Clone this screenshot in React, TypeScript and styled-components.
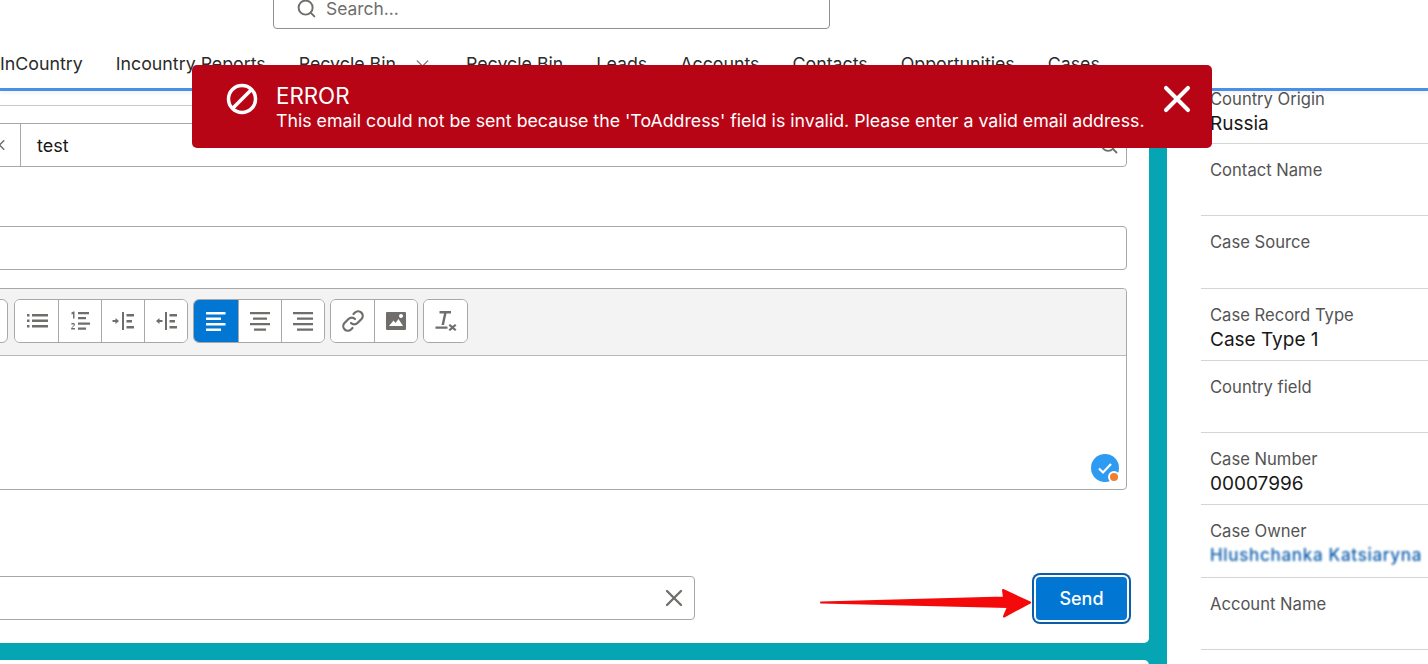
import React from "react";
import styled, { createGlobalStyle } from "styled-components";
import { ChevronDown, Search, X } from "lucide-react";

const GlobalStyle = createGlobalStyle`
  html, body {
    margin: 0;
    padding: 0;
    background: #fff;
    overflow: hidden;
  }
  * {
    box-sizing: border-box;
  }
`;

const Page = styled.div`
  position: relative;
  width: 1428px;
  height: 664px;
  overflow: hidden;
  background: #fff;
  font-family: Inter, "Liberation Sans", sans-serif;
  color: #181818;
`;

const Header = styled.header`
  position: relative;
  display: flex;
  flex-direction: column;
  height: 91px;
  border-bottom: 3px solid #4a90ea;
  box-shadow: 0 2px 4px rgba(0, 0, 0, 0.06);
`;

const SearchBar = styled.div`
  display: flex;
  align-items: center;
  gap: 9px;
  flex: none;
  width: 557px;
  height: 45px;
  margin: -16px 0 0 273px;
  padding: 3px 0 0 22px;
  border: 1px solid #8f8f8f;
  border-radius: 4px;
  color: #706e6b;
  font-size: 17.4px;
`;

const Nav = styled.nav`
  display: flex;
  align-items: center;
  gap: 33px;
  flex: none;
  height: 36px;
  margin-top: 16px;
  font-size: 17.8px;
  color: #2b2b2b;
  white-space: nowrap;
`;

const NavItem = styled.span`
  display: inline-flex;
  align-items: center;
  gap: 16px;
  svg {
    color: #706e6b;
  }
`;

const Body = styled.div`
  display: grid;
  grid-template-columns: 1167px 1fr;
  height: 573px;
`;

const Stage = styled.main`
  display: flex;
  flex-direction: column;
  gap: 17px;
  padding-right: 18px;
  background: #06a5b4;
`;

const Card = styled.section`
  flex: none;
  height: 552px;
  padding: 14px 22px 0 0;
  background: #fff;
  border-bottom-right-radius: 5px;
  overflow: hidden;
`;

const NextCard = styled.div`
  flex: none;
  height: 20px;
  background: #fff;
  border-top-right-radius: 5px;
`;

const Rule = styled.div`
  height: 1px;
  margin-bottom: 17px;
  background: #c9c9c9;
`;

const InputBox = styled.div<{ $top?: number }>`
  display: flex;
  align-items: center;
  height: 44px;
  margin: ${(p) => p.$top ?? 0}px 0 0 -10px;
  background: #fff;
  border: 1px solid #a8a8a8;
  border-radius: 4px;
  font-size: 18px;
`;

const PillEnd = styled.span`
  display: flex;
  align-items: center;
  justify-content: flex-end;
  flex: none;
  width: 30px;
  height: 100%;
  padding-right: 12px;
  border-right: 1px solid #a8a8a8;
  color: #706e6b;
`;

const RecipientText = styled.span`
  flex: 1;
  padding-left: 16px;
`;

const BoxIcon = styled.span`
  display: flex;
  margin-right: 7px;
  color: #706e6b;
`;

const Editor = styled.div`
  position: relative;
  height: 202px;
  margin: 18px 0 0 -10px;
  border: 1px solid #a8a8a8;
  border-radius: 4px;
`;

const Toolbar = styled.div`
  display: flex;
  gap: 5px;
  height: 67px;
  padding: 10px 0 0 0;
  background: #f3f3f3;
  border-bottom: 1px solid #b9b9b9;
  border-radius: 4px 4px 0 0;
`;

const ToolGroup = styled.div<{ $lead?: boolean }>`
  display: flex;
  height: 44px;
  background: #fff;
  border: 1px solid #a8a8a8;
  border-radius: 6px;
  overflow: hidden;
  ${(p) => p.$lead && "width: 18px; margin-left: -1px; margin-right: 1px;"}
`;

const ToolButton = styled.span<{ $active?: boolean }>`
  display: flex;
  align-items: center;
  justify-content: center;
  width: ${(p) => (p.$active ? "44px" : "43px")};
  background: ${(p) => (p.$active ? "#0176d3" : "#fff")};
  color: ${(p) => (p.$active ? "#fff" : "#706e6b")};
  & + & {
    border-left: 1px solid #a8a8a8;
  }
`;

const Badge = styled.svg`
  position: absolute;
  right: 5px;
  bottom: 5px;
`;

const Footer = styled.div`
  display: flex;
  align-items: center;
  justify-content: space-between;
  height: 44px;
  margin-top: 86px;
`;

const AddressBox = styled(InputBox)`
  justify-content: flex-end;
  width: 705px;
  padding-right: 6px;
  color: #706e6b;
`;

const SendButton = styled.button`
  width: 91px;
  height: 43px;
  border: 0;
  border-radius: 4px;
  background: #0176d3;
  color: #fff;
  font: 500 18px Inter, "Liberation Sans", sans-serif;
  box-shadow: 0 0 0 2px #fff, 0 0 0 4px #0b5cab;
`;

const Details = styled.aside`
  padding-left: 34px;
  overflow: hidden;
`;

const DetailRow = styled.div<{ $first?: boolean }>`
  height: ${(p) => (p.$first ? "53px" : "72.3px")};
  padding: ${(p) => (p.$first ? "0" : "18px")} 0 0 9px;
  border-bottom: 1px solid #d4d4d4;
`;

const DetailLabel = styled.div`
  height: 21px;
  font-size: 16.6px;
  line-height: 17px;
  color: #545454;
`;

const DetailValue = styled.div`
  height: 26px;
  font-size: 19px;
  line-height: 24px;
  color: #181818;
`;

const OwnerLink = styled.div`
  height: 26px;
  font-size: 17px;
  font-weight: 500;
  line-height: 22px;
  letter-spacing: 0.7px;
  color: #0b5cab;
  filter: blur(0.9px);
  white-space: nowrap;
`;

const Toast = styled.div`
  position: absolute;
  left: 192px;
  top: 65px;
  display: flex;
  align-items: center;
  width: 1020px;
  height: 83px;
  padding: 0 13px 16px 34px;
  background: #b80516;
  border-radius: 5px;
  color: #fff;
`;

const ToastText = styled.div`
  flex: 1;
  align-self: flex-start;
  margin: 17px 0 0 18px;
`;

const ToastTitle = styled.div`
  font-size: 22.3px;
  line-height: 28px;
`;

const ToastMessage = styled.div`
  font-size: 17.75px;
  line-height: 22px;
  white-space: nowrap;
`;

const Arrow = styled.svg`
  position: absolute;
  left: 818px;
  top: 584px;
`;

const Icon = ({ d }: { d: string }) => (
  <svg width="24" height="24" viewBox="0 0 24 24" fill="currentColor">
    <path d={d} />
  </svg>
);

const icons = {
  list: <Icon d="M2 5h2.500v2.500H2zM2 10.500h2.500V13H2zM2 16h2.500v2.500H2zM7 5h16v2.500H7zM7 10.500h16V13H7zM7 16h16v2.500H7z" />,
  numbered: (
    <Icon d="M10 3h11v2.200H10zM10 8h8v2.200H10zM10 13.500h12v2.200H10zM10 18.500h8v2.200H10zM3.500 3.500l2-1h1v7H5V5L3.500 5.500zM3 15c.5-1.500 4-1.500 4 .5 0 1.500-2.500 2.500-2.800 3.500H7v1.500H3c0-2.500 2.800-3.300 2.800-4.800 0-.8-1.300-.7-1.800 0z" />
  ),
  indent: <Icon d="M11 3h2v18h-2zM15.500 5H23v2.500h-7.500zM15.500 11H21v2.500h-5.500zM15.500 17H23v2.500h-7.500zM1.500 11h3V9l3.500 3-3.500 3v-2h-3z" />,
  outdent: <Icon d="M11 3h2v18h-2zM15.500 5H23v2.500h-7.500zM15.500 11H21v2.500h-5.500zM15.500 17H23v2.500h-7.500zM8.500 11h-3V9L2 12l3.500 3v-2h3z" />,
  left: <Icon d="M2 3h19.500v2.500H2zM2 8.500h15V11H2zM2 14h19.500v2.500H2zM2 19.500h15V22H2z" />,
  center: <Icon d="M2 3h20v2.300H2zM5 8.500h14v2.300H5zM2 14h20v2.300H2zM6 19.500h12v2.300H6z" />,
  right: <Icon d="M2 3h20v2.300H2zM6 8.500h16v2.300H6zM2 14h20v2.300H2zM6 19.500h16v2.300H6z" />,
  link: (
    <svg width="24" height="24" viewBox="0 0 24 24" fill="none" stroke="currentColor" strokeWidth="2.200" strokeLinecap="round">
      <path d="M10 14a4.500 4.500 0 0 0 6.500 0l4-4a4.600 4.600 0 0 0-6.500-6.500l-1.500 1.500" />
      <path d="M14 10a4.500 4.500 0 0 0-6.500 0l-4 4a4.600 4.600 0 0 0 6.500 6.500l1.500-1.500" />
    </svg>
  ),
  image: (
    <Icon d="M3 3h18a1 1 0 0 1 1 1v16a1 1 0 0 1-1 1H3a1 1 0 0 1-1-1V4a1 1 0 0 1 1-1zm2 14h14l-4.500-7-3 4-2-2.500zM17 5a2 2 0 1 0 .01 0z" />
  ),
  clear: (
    <Icon d="M5.500 2H17v2.500h-4.500L10 16H7.500L10 4.500H5.500zM1.500 17.500h12v2.200h-12zM16 15l2.500 2 2.500-2 1.500 1.500-2.500 2 2.500 2L21 22l-2.500-2-2.500 2-1.500-1.500 2.500-2-2.500-2z" />
  ),
};

const toolGroups: { name: keyof typeof icons; active?: boolean }[][] = [
  [{ name: "list" }, { name: "numbered" }, { name: "indent" }, { name: "outdent" }],
  [{ name: "left", active: true }, { name: "center" }, { name: "right" }],
  [{ name: "link" }, { name: "image" }],
  [{ name: "clear" }],
];

const navItems = ["InCountry", "Incountry Reports", "Recycle Bin", "Recycle Bin", "Leads", "Accounts", "Contacts", "Opportunities", "Cases"];

const details: { label: string; value?: string; owner?: boolean }[] = [
  { label: "Country Origin", value: "Russia" },
  { label: "Contact Name" },
  { label: "Case Source" },
  { label: "Case Record Type", value: "Case Type 1" },
  { label: "Country field" },
  { label: "Case Number", value: "00007996" },
  { label: "Case Owner", value: "Hlushchanka Katsiaryna", owner: true },
  { label: "Account Name" },
];

export default function App() {
  return (
    <Page>
      <GlobalStyle />
      <Header>
        <SearchBar>
          <Search size={21} strokeWidth={2.2} />
          Search...
        </SearchBar>
        <Nav>
          {navItems.map((item, i) => (
            <NavItem key={i}>
              {item}
              {i === 2 && <ChevronDown size={21} strokeWidth={1.5} />}
            </NavItem>
          ))}
        </Nav>
      </Header>
      <Body>
        <Stage>
          <Card>
            <Rule />
            <InputBox>
              <PillEnd>
                <X size={20} strokeWidth={2.2} />
              </PillEnd>
              <RecipientText>test</RecipientText>
              <BoxIcon>
                <Search size={20} strokeWidth={2.2} />
              </BoxIcon>
            </InputBox>
            <InputBox $top={59} />
            <Editor>
              <Toolbar>
                <ToolGroup $lead />
                {toolGroups.map((group, i) => (
                  <ToolGroup key={i}>
                    {group.map((tool) => (
                      <ToolButton key={tool.name} $active={tool.active}>
                        {icons[tool.name]}
                      </ToolButton>
                    ))}
                  </ToolGroup>
                ))}
              </Toolbar>
              <Badge width="30" height="30" viewBox="0 0 30 30">
                <circle cx="14" cy="14" r="14" fill="#2e9bf2" />
                <path d="M8 14.500l4 4 8-8.500" fill="none" stroke="#fff" strokeWidth="2.200" />
                <circle cx="23" cy="23" r="6" fill="#fff" />
                <circle cx="23" cy="23" r="4" fill="#f0802e" />
              </Badge>
            </Editor>
            <Footer>
              <AddressBox>
                <X size={28} strokeWidth={2} />
              </AddressBox>
              <SendButton>Send</SendButton>
            </Footer>
          </Card>
          <NextCard />
        </Stage>
        <Details>
          {details.map((d, i) => (
            <DetailRow key={d.label} $first={i === 0}>
              <DetailLabel>{d.label}</DetailLabel>
              {d.owner ? <OwnerLink>{d.value}</OwnerLink> : <DetailValue>{d.value}</DetailValue>}
            </DetailRow>
          ))}
        </Details>
      </Body>
      <Toast>
        <svg width="32" height="32" viewBox="0 0 32 32" fill="none" stroke="#fff" strokeWidth="3.500">
          <circle cx="16" cy="16" r="13.500" />
          <path d="M25.500 6.500l-19 19" />
        </svg>
        <ToastText>
          <ToastTitle>ERROR</ToastTitle>
          <ToastMessage>This email could not be sent because the 'ToAddress' field is invalid. Please enter a valid email address.</ToastMessage>
        </ToastText>
        <X size={44} strokeWidth={2.2} />
      </Toast>
      <Arrow width="220" height="40" viewBox="0 0 220 40">
        <path
          d="M3 18.500L186 13.500L185 6L212 18.500L186 32.500L190 23z"
          fill="#f40a0a"
          stroke="#f40a0a"
          strokeWidth="2"
          strokeLinejoin="round"
        />
      </Arrow>
    </Page>
  );
}
